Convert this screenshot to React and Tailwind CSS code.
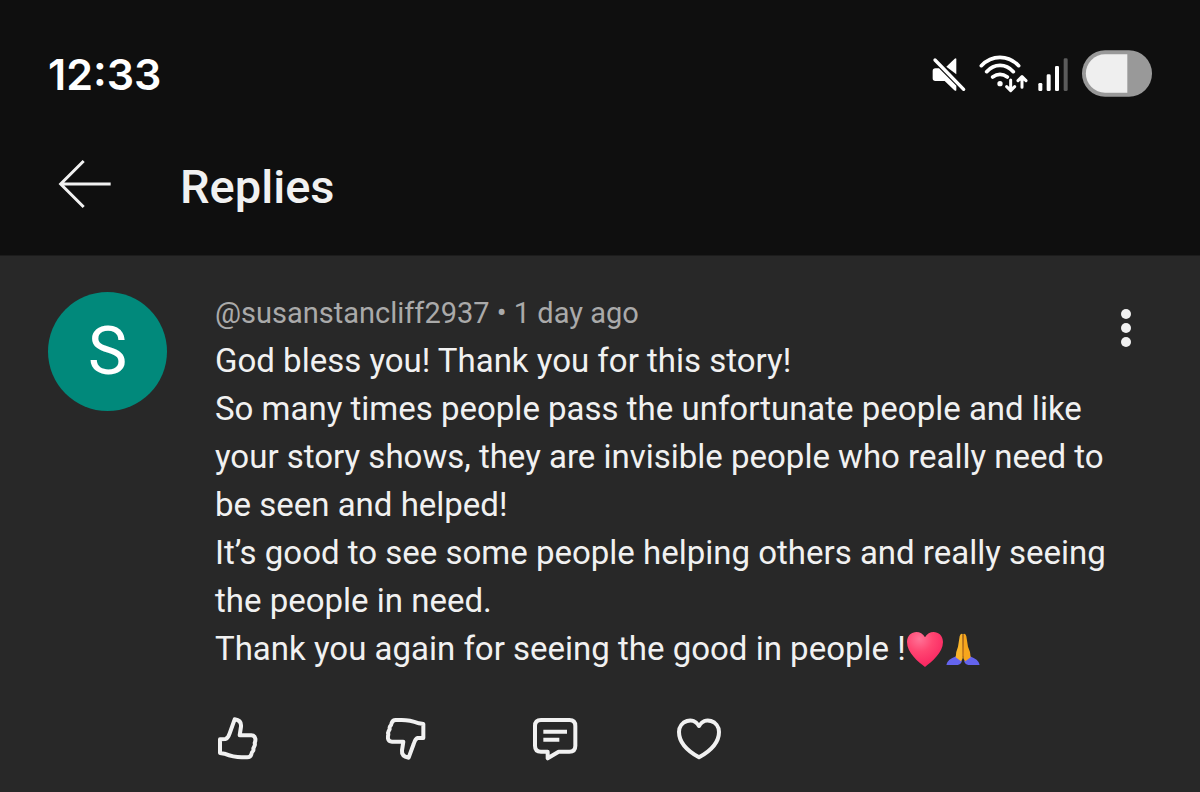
const LINES = [
  'God bless you! Thank you for this story!',
  'So many times people pass the unfortunate people and like your story shows, they are invisible people who really need to be seen and helped!',
  'It’s good to see some people helping others and really seeing the people in need.',
]

export default function App() {
  return (
    <div className="flex min-h-screen flex-col bg-[#282828] font-[Roboto,sans-serif] text-[#f1f1f1]">
      <header className="border-b border-[#1c1c1c] bg-[#0f0f0f]">
        <StatusBar />
        <div className="flex h-[108px] items-start gap-[68px] pt-2 pl-[58px]">
          <button aria-label="Back" className="py-1">
            <BackIcon />
          </button>
          <h1 className="text-[47px] leading-[64px] font-medium">Replies</h1>
        </div>
      </header>
      <main className="flex-1">
        <Comment />
      </main>
    </div>
  )
}

function StatusBar() {
  return (
    <div className="flex h-[147px] items-center justify-between px-12">
      <time className="font-[Inter,sans-serif] text-[43px] leading-[48px] font-semibold text-white">12:33</time>
      <div className="flex items-center gap-[10px]">
        <MuteIcon />
        <WifiIcon />
        <SignalIcon />
        <BatteryIcon />
      </div>
    </div>
  )
}

function Comment() {
  return (
    <article className="flex items-start gap-12 pt-9 pr-14 pl-12">
      <div className="grid size-[119px] shrink-0 place-items-center rounded-full bg-[#01897b] text-[66px] leading-none text-white">
        S
      </div>
      <div className="min-w-0 flex-1">
        <div className="flex items-start justify-between">
          <div className="min-w-0 flex-1">
            <div className="h-[45px] text-[29px] leading-[42px] text-[#aaaaaa]">
              @susanstancliff2937 • 1 day ago
            </div>
            <div className="text-[33px] leading-[48px]">
              {LINES.map((line) => (
                <p key={line}>{line}</p>
              ))}
              <p className="flex items-center">
                Thank you again for seeing the good in people !
                <HeartEmoji />
                <PrayEmoji />
              </p>
            </div>
          </div>
          <button aria-label="More" className="mt-4 px-3">
            <MoreIcon />
          </button>
        </div>
        <Actions />
      </div>
    </article>
  )
}

function Actions() {
  return (
    <div className="mt-[43px] flex items-center">
      <button aria-label="Like" className="w-[168px]">
        <LikeIcon />
      </button>
      <button aria-label="Dislike" className="w-[148px]">
        <DislikeIcon />
      </button>
      <button aria-label="Reply" className="w-36">
        <ReplyIcon />
      </button>
      <button aria-label="Heart">
        <HeartIcon />
      </button>
    </div>
  )
}

function BackIcon() {
  return (
    <svg width="54" height="50" viewBox="84 353 162 150" fill="none" stroke="currentColor" strokeWidth="9">
      <path d="M161 359 92 428l69 69M92 428h150" />
    </svg>
  )
}

function MuteIcon() {
  return (
    <svg width="38" height="38" viewBox="30 42 114 114" fill="#fff">
      <path d="M79 77 104 53q5-4 5 2v45z" />
      <path d="M38 90q0-8 8-8h11l52 52v12q0 6-6 2L74 120H46q-8 0-8-8z" />
      <path d="M45 57 131 145" fill="none" stroke="#fff" strokeWidth="10" strokeLinecap="round" />
    </svg>
  )
}

function WifiIcon() {
  return (
    <svg width="50" height="38" viewBox="174 42 150 114" fill="none" stroke="#fff" strokeWidth="11" strokeLinecap="round" strokeLinejoin="round">
      <path d="M184 74Q208 49 240 49T296 74M200 92Q217 73 240 73T280 92M218 108Q240 92 262 108" />
      <circle cx="240" cy="128" r="8" fill="#fff" stroke="none" />
      <path d="M272 117V148M260 137 272 149 284 137M306 139V109M294 119 306 107 318 119" strokeWidth="9" />
    </svg>
  )
}

function SignalIcon() {
  return (
    <svg width="34" height="38" viewBox="354 42 102 114" fill="#fff">
      <rect x="355" y="126" width="12" height="24" rx="4" />
      <rect x="380" y="100" width="12" height="50" rx="4" />
      <rect x="405" y="75" width="12" height="75" rx="4" />
      <rect x="431" y="52" width="12" height="98" rx="4" fill="#5c5c5c" />
    </svg>
  )
}

function BatteryIcon() {
  return (
    <svg width="70" height="47" viewBox="486 30 210 141">
      <rect x="486" y="31" width="210" height="139" rx="69" fill="#999" />
      <path d="M622 43V158H555A57.500 57.500 0 0 1 555 43z" fill="#efefef" />
    </svg>
  )
}

function MoreIcon() {
  return (
    <svg width="12" height="40" viewBox="0 0 12 40" fill="currentColor">
      <circle cx="6" cy="6" r="5" />
      <circle cx="6" cy="20" r="5" />
      <circle cx="6" cy="34" r="5" />
    </svg>
  )
}

function HeartEmoji() {
  return (
    <svg width="38" height="38" viewBox="81 55 114 114" role="img" aria-label="heart">
      <defs>
        <radialGradient id="heart-fill" cx="0.35" cy="0.2" r="0.9">
          <stop offset="0" stopColor="#ff7397" />
          <stop offset="0.4" stopColor="#ff4672" />
          <stop offset="1" stopColor="#f81d5c" />
        </radialGradient>
      </defs>
      <path
        d="M138 166C118 150 84 124 84 91C84 58 124 50 138 77C152 50 192 58 192 91C192 124 158 150 138 166z"
        fill="url(#heart-fill)"
      />
    </svg>
  )
}

function PrayEmoji() {
  return (
    <svg width="38" height="38" viewBox="196 55 114 114" role="img" aria-label="folded hands">
      <path d="M203 159Q207 143 232 134L250 147Q247 158 237 160H206zM303 159Q299 143 274 134L256 147Q259 158 269 160H300z" fill="#6464ee" />
      <path d="M252 67Q245 64 243 74L238 105Q232 118 231 137L247 149Q253 142 253 132z" fill="#fbb52b" />
      <path d="M254 67Q261 64 263 74L268 105Q275 118 276 137L260 149Q253 142 253 132z" fill="#f7a61c" />
      <path d="M253 69V136" stroke="#a85a16" strokeWidth="3" />
    </svg>
  )
}

function LikeIcon() {
  return (
    <svg width="44" height="46" viewBox="48 45 132 138" fill="none" stroke="currentColor" strokeWidth="12" strokeLinejoin="round">
      <path d="M63 115V156L76 158Q104 169 128 169H145Q154 169 157 160Q158 153 162 150Q164 147 163 142L166 136Q169 131 167 126Q170 119 169 113Q167 103 157 103H122L126 77Q128 58 107 55L92 97Q87 112 79 114z" />
    </svg>
  )
}

function DislikeIcon() {
  return (
    <svg width="44" height="46" viewBox="552 50 132 138" fill="none" stroke="currentColor" strokeWidth="12" strokeLinejoin="round">
      <path d="M673 116V74L660 72Q632 62 608 62H590Q581 62 578 71Q577 78 573 81Q571 84 572 90L569 95Q566 100 568 105Q566 111 567 118Q569 127 579 127H613L609 153Q607 172 629 175L644 134Q649 118 656 116z" />
    </svg>
  )
}

function ReplyIcon() {
  return (
    <svg width="48" height="46" viewBox="96 50 144 138" fill="none" stroke="currentColor" strokeWidth="12" strokeLinejoin="round">
      <path d="M126 62H211Q229 62 229 80V139Q229 157 211 157H179L146 177V157H126Q108 157 108 139V80Q108 62 126 62z" />
      <path d="M133 97H204M133 121H181" />
    </svg>
  )
}

function HeartIcon() {
  return (
    <svg width="48" height="46" viewBox="526 50 144 138" fill="none" stroke="currentColor" strokeWidth="12" strokeLinejoin="round">
      <path d="M598 174Q538 141 538 98C538 64 582 50 598 80C614 50 658 64 658 98Q658 141 598 174z" />
    </svg>
  )
}
